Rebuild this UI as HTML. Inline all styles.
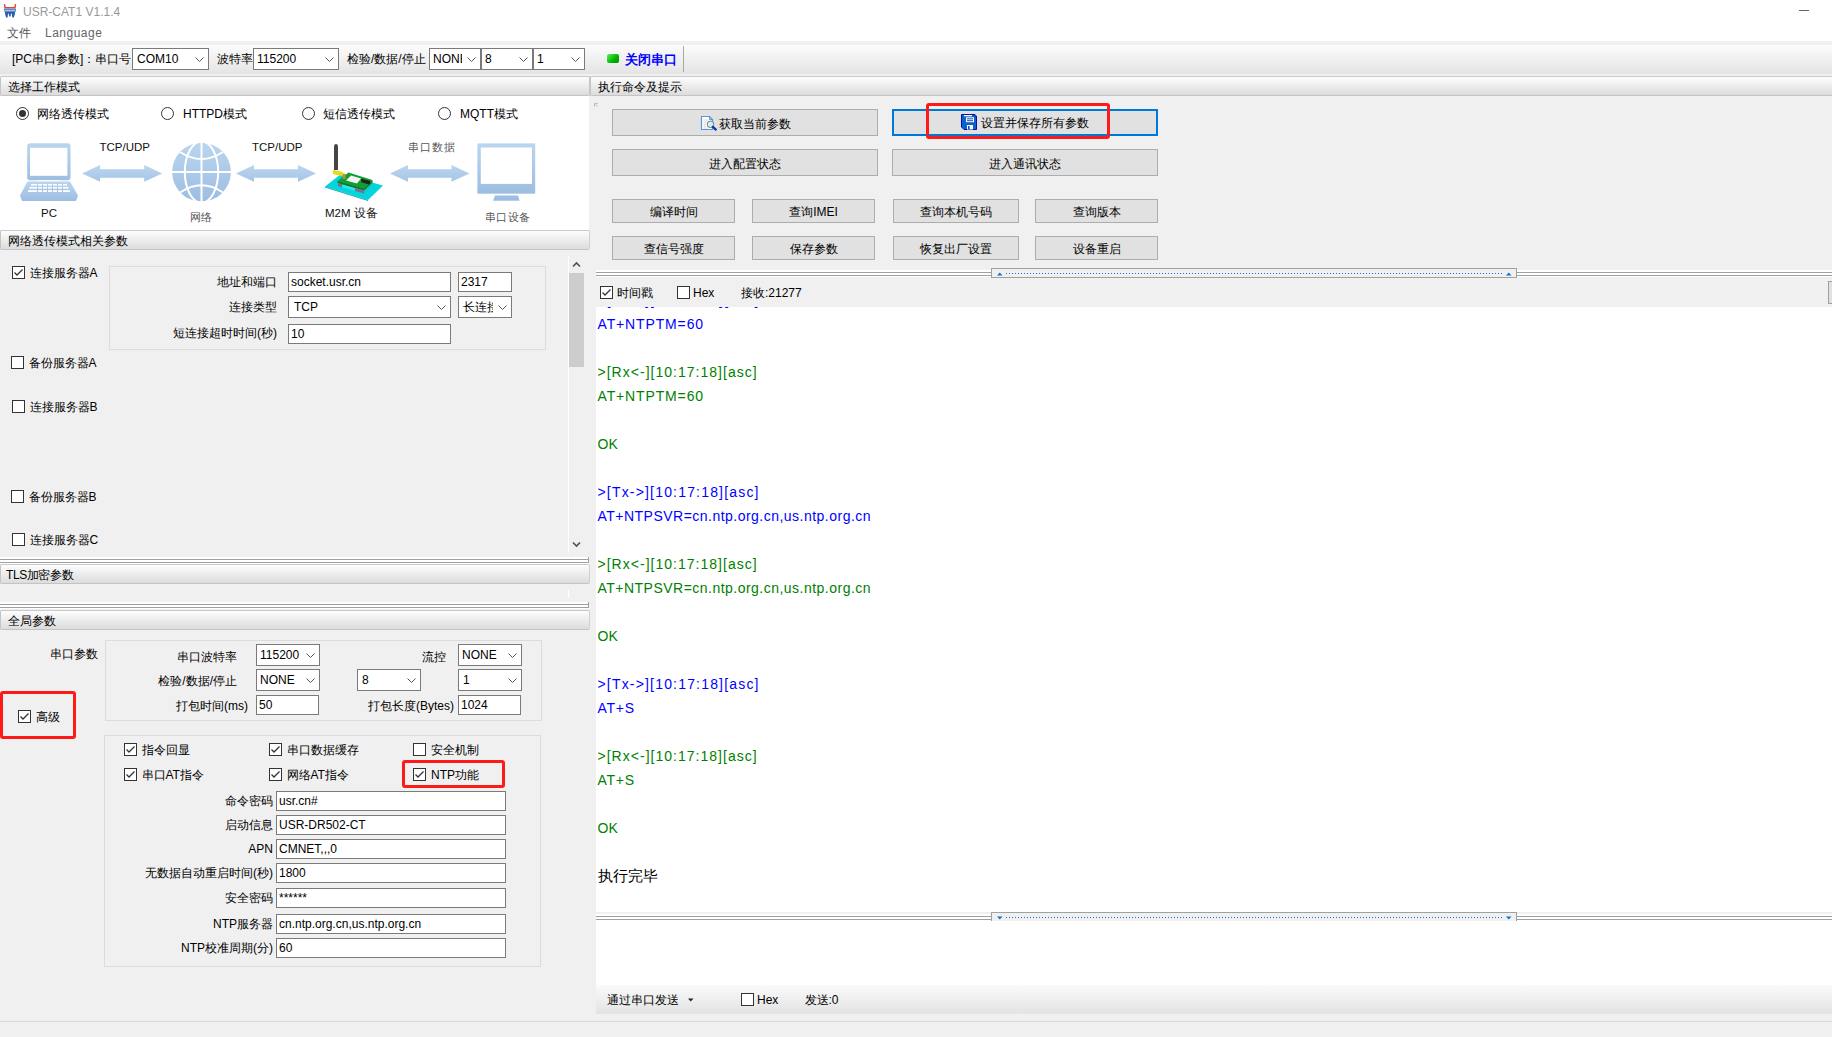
<!DOCTYPE html>
<html><head><meta charset="utf-8"><title>USR-CAT1</title>
<style>
html,body{margin:0;padding:0}
body{width:1832px;height:1037px;overflow:hidden;position:relative;background:#f0f0f0;font-family:'Liberation Sans', sans-serif;font-size:12px;color:#000}
.a{position:absolute;box-sizing:content-box}
.t{position:absolute;white-space:nowrap}
.hdr{background:linear-gradient(#fdfdfd,#dcdcdc);border-top:1px solid #cacaca;border-bottom:1px solid #c4c4c4;border-left:1px solid #c4c4c4;border-right:1px solid #d0d0d0;border-radius:2px}
</style></head><body>

<div class="a" style="left:0px;top:0px;width:1832px;height:41px;background:#fff"></div>
<svg class="a" style="left:0;top:0" width="20" height="20" viewBox="0 0 20 20"><path d="M3.8 4 L5 4 L5.8 7 L14.2 7 L15 4 L16.2 4 L15.6 8.6 L4.4 8.6 Z" fill="#d9482f"/><rect x="4" y="8.6" width="12" height="3" fill="#5a88c8"/><rect x="4.8" y="10" width="10.4" height="0.9" fill="#b8cbe8"/><path d="M4.8 11.6 L15.2 11.6 L14.8 14.5 L13.8 17.6 L12.3 17.6 L11.9 13.8 L11 13.8 L10.6 16.6 L9.2 16.6 L8.8 13.8 L8 13.8 L7.6 17.6 L6.1 17.6 L5.2 14.5 Z" fill="#2a5fb4"/></svg>
<div class="t" style="left:23px;top:3.5px;font-size:12px;line-height:16px;color:#999;">USR-CAT1 V1.1.4</div>
<div class="a" style="left:1799px;top:10px;width:10px;height:1px;background:#666"></div>
<div class="t" style="left:7px;top:24.5px;font-size:12px;line-height:16px;color:#555;">文件</div>
<div class="t" style="left:45px;top:24.5px;font-size:12px;line-height:16px;color:#666;letter-spacing:0.5px">Language</div>
<div class="a" style="left:0px;top:45px;width:1832px;height:29px;background:linear-gradient(#fcfcfc,#e4e4e4)"></div>
<div class="t" style="left:12px;top:51.0px;font-size:12px;line-height:16px;color:#000;">[PC串口参数]：串口号</div>
<div class="a" style="left:132px;top:48px;width:75px;height:20px;border:1px solid #7a7a7a;background:#fff;overflow:hidden"><div class="a" style="left:4px;top:2.0px;right:18px;height:16px;overflow:hidden"><div class="t" style="left:0;top:0;line-height:16px;font-size:12px">COM10</div></div><svg width="9" height="5" viewBox="0 0 9 5" style="position:absolute;right:4px;top:8px"><path d="M0.5 0.5 L4.5 4.5 L8.5 0.5" fill="none" stroke="#555" stroke-width="1"/></svg></div>
<div class="t" style="left:217px;top:51.0px;font-size:12px;line-height:16px;color:#000;">波特率</div>
<div class="a" style="left:253px;top:48px;width:84px;height:20px;border:1px solid #7a7a7a;background:#fff;overflow:hidden"><div class="a" style="left:3px;top:2.0px;right:18px;height:16px;overflow:hidden"><div class="t" style="left:0;top:0;line-height:16px;font-size:12px">115200</div></div><svg width="9" height="5" viewBox="0 0 9 5" style="position:absolute;right:4px;top:8px"><path d="M0.5 0.5 L4.5 4.5 L8.5 0.5" fill="none" stroke="#555" stroke-width="1"/></svg></div>
<div class="t" style="left:347px;top:51.0px;font-size:12px;line-height:16px;color:#000;">检验/数据/停止</div>
<div class="a" style="left:429px;top:48px;width:50px;height:20px;border:1px solid #7a7a7a;background:#fff;overflow:hidden"><div class="a" style="left:3px;top:2.0px;right:18px;height:16px;overflow:hidden"><div class="t" style="left:0;top:0;line-height:16px;font-size:12px">NONE</div></div><svg width="9" height="5" viewBox="0 0 9 5" style="position:absolute;right:4px;top:8px"><path d="M0.5 0.5 L4.5 4.5 L8.5 0.5" fill="none" stroke="#555" stroke-width="1"/></svg></div>
<div class="a" style="left:481px;top:48px;width:50px;height:20px;border:1px solid #7a7a7a;background:#fff;overflow:hidden"><div class="a" style="left:3px;top:2.0px;right:18px;height:16px;overflow:hidden"><div class="t" style="left:0;top:0;line-height:16px;font-size:12px">8</div></div><svg width="9" height="5" viewBox="0 0 9 5" style="position:absolute;right:4px;top:8px"><path d="M0.5 0.5 L4.5 4.5 L8.5 0.5" fill="none" stroke="#555" stroke-width="1"/></svg></div>
<div class="a" style="left:533px;top:48px;width:50px;height:20px;border:1px solid #7a7a7a;background:#fff;overflow:hidden"><div class="a" style="left:3px;top:2.0px;right:18px;height:16px;overflow:hidden"><div class="t" style="left:0;top:0;line-height:16px;font-size:12px">1</div></div><svg width="9" height="5" viewBox="0 0 9 5" style="position:absolute;right:4px;top:8px"><path d="M0.5 0.5 L4.5 4.5 L8.5 0.5" fill="none" stroke="#555" stroke-width="1"/></svg></div>
<div class="a" style="left:607px;top:54px;width:12px;height:9px;border-radius:2px;background:linear-gradient(135deg,#5ff05f,#00b400 60%,#009000)"></div>
<div class="t" style="left:625px;top:51.0px;font-size:13px;line-height:17px;color:#0000ff;font-weight:bold">关闭串口</div>
<div class="a" style="left:683px;top:46px;width:1px;height:26px;background:#a8a8a8"></div>
<div class="a hdr" style="left:0px;top:76px;width:588px;height:18px"></div>
<div class="t" style="left:8px;top:78.5px;font-size:12px;line-height:16px;color:#000;">选择工作模式</div>
<div class="a" style="left:0px;top:96px;width:589px;height:134px;background:#fff"></div>
<div class="a" style="left:589px;top:76px;width:1px;height:20px;background:#c8c8c8"></div>
<svg class="a" width="13" height="13" style="left:16.0px;top:107.0px"><circle cx="6.5" cy="6.5" r="6" fill="#fff" stroke="#333" stroke-width="1"/><circle cx="6.5" cy="6.5" r="3.5" fill="#333"/></svg>
<div class="t" style="left:37px;top:105.5px;font-size:12px;line-height:16px;color:#000;">网络透传模式</div>
<svg class="a" width="13" height="13" style="left:161.0px;top:107.0px"><circle cx="6.5" cy="6.5" r="6" fill="#fff" stroke="#333" stroke-width="1"/></svg>
<div class="t" style="left:183px;top:105.5px;font-size:12px;line-height:16px;color:#000;">HTTPD模式</div>
<svg class="a" width="13" height="13" style="left:302.0px;top:107.0px"><circle cx="6.5" cy="6.5" r="6" fill="#fff" stroke="#333" stroke-width="1"/></svg>
<div class="t" style="left:323px;top:105.5px;font-size:12px;line-height:16px;color:#000;">短信透传模式</div>
<svg class="a" width="13" height="13" style="left:438.0px;top:107.0px"><circle cx="6.5" cy="6.5" r="6" fill="#fff" stroke="#333" stroke-width="1"/></svg>
<div class="t" style="left:460px;top:105.5px;font-size:12px;line-height:16px;color:#000;">MQTT模式</div>
<svg class="a" style="left:0;top:96px" width="589" height="134" viewBox="0 96 589 134"><defs><linearGradient id="gb" x1="0" y1="0" x2="0" y2="1"><stop offset="0" stop-color="#bad5ef"/><stop offset="1" stop-color="#9dbee2"/></linearGradient><linearGradient id="ga" x1="0" y1="0" x2="0" y2="1"><stop offset="0" stop-color="#bcd5ee"/><stop offset="1" stop-color="#a6c5e6"/></linearGradient></defs><rect x="27.2" y="143.3" width="43.3" height="37" rx="3" fill="url(#gb)"/><rect x="30" y="147.8" width="37.4" height="28" fill="#fff"/><rect x="37.5" y="180.2" width="22.5" height="0.9" fill="#fff"/><polygon points="27.5,181.5 70,181.5 78,195.5 76,201 22,201 20,195.5" fill="url(#gb)"/><g fill="#fff"><rect x="31" y="184" width="36" height="1.6"/><rect x="29.5" y="187" width="39" height="1.6"/><rect x="28" y="190.2" width="42" height="1.8"/></g><g fill="url(#gb)"><rect x="37" y="183" width="1" height="10"/><rect x="42" y="183" width="1" height="10"/><rect x="47" y="183" width="1" height="10"/><rect x="52" y="183" width="1" height="10"/><rect x="57" y="183" width="1" height="10"/><rect x="62" y="183" width="1" height="10"/></g><circle cx="201.5" cy="172.1" r="29.4" fill="url(#gb)"/><g fill="none" stroke="#fff" stroke-width="2"><line x1="201.5" y1="141" x2="201.5" y2="203"/><line x1="171" y1="172.1" x2="232" y2="172.1"/><ellipse cx="201.5" cy="172.1" rx="16.7" ry="30.5"/><path d="M180 152 Q201.5 166 223 152"/><path d="M180 192.5 Q201.5 178 223 192.5"/></g><rect x="477.4" y="143.4" width="57.8" height="50.3" fill="url(#gb)"/><rect x="480.8" y="147.5" width="51.2" height="36.4" fill="#fff"/><polygon points="495,195.4 518,195.4 519.6,200.8 493,200.8" fill="#9dbee2"/><polygon points="82.1,173.4 100.1,165.1 100.1,169.15 144.2,169.15 144.2,165.1 162.2,173.4 144.2,181.70000000000002 144.2,177.65 100.1,177.65 100.1,181.70000000000002" fill="url(#ga)"/><polygon points="236,173.4 254,165.1 254,169.15 298,169.15 298,165.1 316,173.4 298,181.70000000000002 298,177.65 254,177.65 254,181.70000000000002" fill="url(#ga)"/><polygon points="390,173.4 408,165.1 408,169.15 451.5,169.15 451.5,165.1 469.5,173.4 451.5,181.70000000000002 451.5,177.65 408,177.65 408,181.70000000000002" fill="url(#ga)"/><polygon points="325,186.5 341,174 383,185.5 368,200" fill="#00d6dc"/><polygon points="325,186.5 368,200 368,201 325,187.5" fill="#08a8b0"/><polygon points="338,183 364,190.5 364,193.5 338,186" fill="#30e4ea"/><polygon points="364,190.5 372.5,182.5 372.5,185.5 364,193.5" fill="#20c0c8"/><polygon points="337.5,181 348.5,172.5 372.5,180 364,188.5" fill="#10a030"/><polygon points="337.5,181 364,188.5 372.5,180 372.5,182.5 364,190.5 337.5,183" fill="#0a7a24"/><polygon points="338,183 342,184.2 342,187.5 338,186.3" fill="#7a6f8a"/><polygon points="355,188 364,190.5 364,193.5 355,191" fill="#7a6f8a"/><polygon points="346,180.5 351,175.5 361,178.5 357,183.5" fill="#f4f4f4"/><polygon points="361,178.5 370.5,181 369.5,184.5 361.5,182.5" fill="#222"/><path d="M334 170 L334 147 Q334 144 336 144 Q338 144 338 147 L338 170 Z" fill="#454545"/><polygon points="333,170 341,171.5 345.5,174 341,176 333,174" fill="#e8d820"/><rect x="343" y="174" width="2.5" height="5" fill="#d08a2a"/></svg>
<div class="t" style="left:99.5px;top:139.75px;font-size:11.5px;line-height:15.5px;color:#111;">TCP/UDP</div>
<div class="t" style="left:252px;top:139.75px;font-size:11.5px;line-height:15.5px;color:#111;">TCP/UDP</div>
<div class="t" style="left:407.5px;top:140.0px;font-size:11px;line-height:15px;color:#555;letter-spacing:1px">串口数据</div>
<div class="t" style="left:41px;top:205.75px;font-size:11.5px;line-height:15.5px;color:#111;">PC</div>
<div class="t" style="left:190px;top:209.5px;font-size:11px;line-height:15px;color:#555;">网络</div>
<div class="t" style="left:325px;top:205.75px;font-size:11.5px;line-height:15.5px;color:#111;">M2M 设备</div>
<div class="t" style="left:484.5px;top:209.5px;font-size:11px;line-height:15px;color:#555;letter-spacing:0.5px">串口设备</div>
<div class="a hdr" style="left:0px;top:230px;width:588px;height:18px"></div>
<div class="t" style="left:8px;top:232.5px;font-size:12px;line-height:16px;color:#000;">网络透传模式相关参数</div>
<div class="a" style="left:12px;top:266px;width:11px;height:11px;border:1px solid #333;background:#fff"><svg width="11" height="11" viewBox="0 0 11 11" style="position:absolute;left:0;top:0"><path d="M1.5 5.5 L4 8 L9.5 2.5" fill="none" stroke="#333" stroke-width="1.3"/></svg></div>
<div class="t" style="left:29.5px;top:264.5px;font-size:12px;line-height:16px;color:#000;">连接服务器A</div>
<div class="a" style="left:109px;top:266px;width:435px;height:82px;border:1px solid #dcdcdc"></div>
<div class="t" style="right:1555px;top:274.0px;font-size:12px;line-height:16px;color:#000;text-align:right;">地址和端口</div>
<div class="a" style="left:288px;top:272px;width:161px;height:18px;border:1px solid #7a7a7a;background:#fff;overflow:hidden"><div class="t" style="left:2px;top:1.0px;line-height:16px;font-size:12px">socket.usr.cn</div></div>
<div class="a" style="left:458px;top:272px;width:52px;height:18px;border:1px solid #7a7a7a;background:#fff;overflow:hidden"><div class="t" style="left:2px;top:1.0px;line-height:16px;font-size:12px">2317</div></div>
<div class="t" style="right:1555px;top:299.0px;font-size:12px;line-height:16px;color:#000;text-align:right;">连接类型</div>
<div class="a" style="left:288px;top:296px;width:161px;height:20px;border:1px solid #7a7a7a;background:#fff;overflow:hidden"><div class="a" style="left:5px;top:2.0px;right:18px;height:16px;overflow:hidden"><div class="t" style="left:0;top:0;line-height:16px;font-size:12px">TCP</div></div><svg width="9" height="5" viewBox="0 0 9 5" style="position:absolute;right:4px;top:8px"><path d="M0.5 0.5 L4.5 4.5 L8.5 0.5" fill="none" stroke="#555" stroke-width="1"/></svg></div>
<div class="a" style="left:458px;top:296px;width:52px;height:20px;border:1px solid #7a7a7a;background:#fff;overflow:hidden"><div class="a" style="left:4px;top:2.0px;right:18px;height:16px;overflow:hidden"><div class="t" style="left:0;top:0;line-height:16px;font-size:12px">长连接</div></div><svg width="9" height="5" viewBox="0 0 9 5" style="position:absolute;right:4px;top:8px"><path d="M0.5 0.5 L4.5 4.5 L8.5 0.5" fill="none" stroke="#555" stroke-width="1"/></svg></div>
<div class="t" style="right:1555px;top:325.0px;font-size:12px;line-height:16px;color:#000;text-align:right;">短连接超时时间(秒)</div>
<div class="a" style="left:288px;top:324px;width:161px;height:18px;border:1px solid #7a7a7a;background:#fff;overflow:hidden"><div class="t" style="left:2px;top:1.0px;line-height:16px;font-size:12px">10</div></div>
<div class="a" style="left:11px;top:356px;width:11px;height:11px;border:1px solid #333;background:#fff"></div>
<div class="t" style="left:28.5px;top:354.5px;font-size:12px;line-height:16px;color:#000;">备份服务器A</div>
<div class="a" style="left:12px;top:400px;width:11px;height:11px;border:1px solid #333;background:#fff"></div>
<div class="t" style="left:29.5px;top:398.5px;font-size:12px;line-height:16px;color:#000;">连接服务器B</div>
<div class="a" style="left:11px;top:490px;width:11px;height:11px;border:1px solid #333;background:#fff"></div>
<div class="t" style="left:28.5px;top:488.5px;font-size:12px;line-height:16px;color:#000;">备份服务器B</div>
<div class="a" style="left:12px;top:533px;width:11px;height:11px;border:1px solid #333;background:#fff"></div>
<div class="t" style="left:29.5px;top:531.5px;font-size:12px;line-height:16px;color:#000;">连接服务器C</div>
<div class="a" style="left:568px;top:256px;width:1px;height:297px;background:#fff"></div>
<svg class="a" style="left:572px;top:261px" width="9" height="7" viewBox="0 0 9 7"><path d="M1 5.5 L4.5 2 L8 5.5" fill="none" stroke="#505050" stroke-width="1.6"/></svg>
<svg class="a" style="left:572px;top:541px" width="9" height="7" viewBox="0 0 9 7"><path d="M1 1.5 L4.5 5 L8 1.5" fill="none" stroke="#505050" stroke-width="1.6"/></svg>
<div class="a" style="left:569px;top:273px;width:15px;height:94px;background:#cdcdcd"></div>
<div class="a" style="left:0px;top:557px;width:589px;height:7px;background:#fff"></div>
<div class="a" style="left:0px;top:559px;width:589px;height:1px;background:#a0a0a0"></div>
<div class="a" style="left:0px;top:562px;width:589px;height:1px;background:#a0a0a0"></div>
<div class="a" style="left:588px;top:557px;width:1px;height:6px;background:#a0a0a0"></div>
<div class="a hdr" style="left:0px;top:564px;width:588px;height:18px"></div>
<div class="t" style="left:6px;top:566.5px;font-size:12px;line-height:16px;color:#000;letter-spacing:-0.4px">TLS加密参数</div>
<div class="a" style="left:568px;top:590px;width:1px;height:8px;background:#fff"></div>
<div class="a" style="left:0px;top:602px;width:589px;height:7px;background:#fff"></div>
<div class="a" style="left:0px;top:604px;width:589px;height:1px;background:#a0a0a0"></div>
<div class="a" style="left:0px;top:607px;width:589px;height:1px;background:#a0a0a0"></div>
<div class="a" style="left:588px;top:602px;width:1px;height:6px;background:#a0a0a0"></div>
<div class="a hdr" style="left:0px;top:610px;width:588px;height:18px"></div>
<div class="t" style="left:8px;top:612.5px;font-size:12px;line-height:16px;color:#000;">全局参数</div>
<div class="t" style="right:1734px;top:645.5px;font-size:12px;line-height:16px;color:#000;text-align:right;">串口参数</div>
<div class="a" style="left:105px;top:640px;width:435px;height:79px;border:1px solid #dcdcdc"></div>
<div class="t" style="right:1595px;top:649.0px;font-size:12px;line-height:16px;color:#000;text-align:right;">串口波特率</div>
<div class="a" style="left:256px;top:644px;width:62px;height:20px;border:1px solid #7a7a7a;background:#fff;overflow:hidden"><div class="a" style="left:3px;top:2.0px;right:18px;height:16px;overflow:hidden"><div class="t" style="left:0;top:0;line-height:16px;font-size:12px">115200</div></div><svg width="9" height="5" viewBox="0 0 9 5" style="position:absolute;right:4px;top:8px"><path d="M0.5 0.5 L4.5 4.5 L8.5 0.5" fill="none" stroke="#555" stroke-width="1"/></svg></div>
<div class="t" style="right:1386px;top:649.0px;font-size:12px;line-height:16px;color:#000;text-align:right;">流控</div>
<div class="a" style="left:458px;top:644px;width:62px;height:20px;border:1px solid #7a7a7a;background:#fff;overflow:hidden"><div class="a" style="left:3px;top:2.0px;right:18px;height:16px;overflow:hidden"><div class="t" style="left:0;top:0;line-height:16px;font-size:12px">NONE</div></div><svg width="9" height="5" viewBox="0 0 9 5" style="position:absolute;right:4px;top:8px"><path d="M0.5 0.5 L4.5 4.5 L8.5 0.5" fill="none" stroke="#555" stroke-width="1"/></svg></div>
<div class="t" style="right:1595px;top:673.0px;font-size:12px;line-height:16px;color:#000;text-align:right;">检验/数据/停止</div>
<div class="a" style="left:256px;top:669px;width:62px;height:20px;border:1px solid #7a7a7a;background:#fff;overflow:hidden"><div class="a" style="left:3px;top:2.0px;right:18px;height:16px;overflow:hidden"><div class="t" style="left:0;top:0;line-height:16px;font-size:12px">NONE</div></div><svg width="9" height="5" viewBox="0 0 9 5" style="position:absolute;right:4px;top:8px"><path d="M0.5 0.5 L4.5 4.5 L8.5 0.5" fill="none" stroke="#555" stroke-width="1"/></svg></div>
<div class="a" style="left:357px;top:669px;width:62px;height:20px;border:1px solid #7a7a7a;background:#fff;overflow:hidden"><div class="a" style="left:4px;top:2.0px;right:18px;height:16px;overflow:hidden"><div class="t" style="left:0;top:0;line-height:16px;font-size:12px">8</div></div><svg width="9" height="5" viewBox="0 0 9 5" style="position:absolute;right:4px;top:8px"><path d="M0.5 0.5 L4.5 4.5 L8.5 0.5" fill="none" stroke="#555" stroke-width="1"/></svg></div>
<div class="a" style="left:458px;top:669px;width:62px;height:20px;border:1px solid #7a7a7a;background:#fff;overflow:hidden"><div class="a" style="left:4px;top:2.0px;right:18px;height:16px;overflow:hidden"><div class="t" style="left:0;top:0;line-height:16px;font-size:12px">1</div></div><svg width="9" height="5" viewBox="0 0 9 5" style="position:absolute;right:4px;top:8px"><path d="M0.5 0.5 L4.5 4.5 L8.5 0.5" fill="none" stroke="#555" stroke-width="1"/></svg></div>
<div class="t" style="right:1584px;top:697.5px;font-size:12px;line-height:16px;color:#000;text-align:right;">打包时间(ms)</div>
<div class="a" style="left:256px;top:695px;width:61px;height:18px;border:1px solid #7a7a7a;background:#fff;overflow:hidden"><div class="t" style="left:2px;top:1.0px;line-height:16px;font-size:12px">50</div></div>
<div class="t" style="right:1378px;top:697.5px;font-size:12px;line-height:16px;color:#000;text-align:right;">打包长度(Bytes)</div>
<div class="a" style="left:458px;top:695px;width:61px;height:18px;border:1px solid #7a7a7a;background:#fff;overflow:hidden"><div class="t" style="left:2px;top:1.0px;line-height:16px;font-size:12px">1024</div></div>
<div class="a" style="left:18px;top:710px;width:11px;height:11px;border:1px solid #333;background:#fff"><svg width="11" height="11" viewBox="0 0 11 11" style="position:absolute;left:0;top:0"><path d="M1.5 5.5 L4 8 L9.5 2.5" fill="none" stroke="#333" stroke-width="1.3"/></svg></div>
<div class="t" style="left:35.5px;top:708.5px;font-size:12px;line-height:16px;color:#000;">高级</div>
<div class="a" style="left:0px;top:691px;width:70px;height:42px;border:3px solid #ff1a1a;border-radius:3px"></div>
<div class="a" style="left:104px;top:735px;width:435px;height:230px;border:1px solid #dcdcdc"></div>
<div class="a" style="left:124px;top:743px;width:11px;height:11px;border:1px solid #333;background:#fff"><svg width="11" height="11" viewBox="0 0 11 11" style="position:absolute;left:0;top:0"><path d="M1.5 5.5 L4 8 L9.5 2.5" fill="none" stroke="#333" stroke-width="1.3"/></svg></div>
<div class="t" style="left:141.5px;top:741.5px;font-size:12px;line-height:16px;color:#000;">指令回显</div>
<div class="a" style="left:269px;top:743px;width:11px;height:11px;border:1px solid #333;background:#fff"><svg width="11" height="11" viewBox="0 0 11 11" style="position:absolute;left:0;top:0"><path d="M1.5 5.5 L4 8 L9.5 2.5" fill="none" stroke="#333" stroke-width="1.3"/></svg></div>
<div class="t" style="left:286.5px;top:741.5px;font-size:12px;line-height:16px;color:#000;">串口数据缓存</div>
<div class="a" style="left:413px;top:743px;width:11px;height:11px;border:1px solid #333;background:#fff"></div>
<div class="t" style="left:431px;top:741.5px;font-size:12px;line-height:16px;color:#000;">安全机制</div>
<div class="a" style="left:124px;top:768px;width:11px;height:11px;border:1px solid #333;background:#fff"><svg width="11" height="11" viewBox="0 0 11 11" style="position:absolute;left:0;top:0"><path d="M1.5 5.5 L4 8 L9.5 2.5" fill="none" stroke="#333" stroke-width="1.3"/></svg></div>
<div class="t" style="left:141.5px;top:766.5px;font-size:12px;line-height:16px;color:#000;">串口AT指令</div>
<div class="a" style="left:269px;top:768px;width:11px;height:11px;border:1px solid #333;background:#fff"><svg width="11" height="11" viewBox="0 0 11 11" style="position:absolute;left:0;top:0"><path d="M1.5 5.5 L4 8 L9.5 2.5" fill="none" stroke="#333" stroke-width="1.3"/></svg></div>
<div class="t" style="left:286.5px;top:766.5px;font-size:12px;line-height:16px;color:#000;">网络AT指令</div>
<div class="a" style="left:413px;top:768px;width:11px;height:11px;border:1px solid #333;background:#fff"><svg width="11" height="11" viewBox="0 0 11 11" style="position:absolute;left:0;top:0"><path d="M1.5 5.5 L4 8 L9.5 2.5" fill="none" stroke="#333" stroke-width="1.3"/></svg></div>
<div class="t" style="left:431px;top:766.5px;font-size:12px;line-height:16px;color:#000;">NTP功能</div>
<div class="a" style="left:402px;top:760px;width:97px;height:22px;border:3px solid #ff1a1a;border-radius:3px"></div>
<div class="t" style="right:1559px;top:793.0px;font-size:12px;line-height:16px;color:#000;text-align:right;">命令密码</div>
<div class="a" style="left:276px;top:791px;width:228px;height:18px;border:1px solid #7a7a7a;background:#fff;overflow:hidden"><div class="t" style="left:2px;top:1.0px;line-height:16px;font-size:12px">usr.cn#</div></div>
<div class="t" style="right:1559px;top:817.0px;font-size:12px;line-height:16px;color:#000;text-align:right;">启动信息</div>
<div class="a" style="left:276px;top:815px;width:228px;height:18px;border:1px solid #7a7a7a;background:#fff;overflow:hidden"><div class="t" style="left:2px;top:1.0px;line-height:16px;font-size:12px">USR-DR502-CT</div></div>
<div class="t" style="right:1559px;top:841.0px;font-size:12px;line-height:16px;color:#000;text-align:right;">APN</div>
<div class="a" style="left:276px;top:839px;width:228px;height:18px;border:1px solid #7a7a7a;background:#fff;overflow:hidden"><div class="t" style="left:2px;top:1.0px;line-height:16px;font-size:12px">CMNET,,,0</div></div>
<div class="t" style="right:1559px;top:865.0px;font-size:12px;line-height:16px;color:#000;text-align:right;">无数据自动重启时间(秒)</div>
<div class="a" style="left:276px;top:863px;width:228px;height:18px;border:1px solid #7a7a7a;background:#fff;overflow:hidden"><div class="t" style="left:2px;top:1.0px;line-height:16px;font-size:12px">1800</div></div>
<div class="t" style="right:1559px;top:890.0px;font-size:12px;line-height:16px;color:#000;text-align:right;">安全密码</div>
<div class="a" style="left:276px;top:888px;width:228px;height:18px;border:1px solid #7a7a7a;background:#fff;overflow:hidden"><div class="t" style="left:2px;top:1.0px;line-height:16px;font-size:12px">******</div></div>
<div class="t" style="right:1559px;top:916.0px;font-size:12px;line-height:16px;color:#000;text-align:right;">NTP服务器</div>
<div class="a" style="left:276px;top:914px;width:228px;height:18px;border:1px solid #7a7a7a;background:#fff;overflow:hidden"><div class="t" style="left:2px;top:1.0px;line-height:16px;font-size:12px">cn.ntp.org.cn,us.ntp.org.cn</div></div>
<div class="t" style="right:1559px;top:940.0px;font-size:12px;line-height:16px;color:#000;text-align:right;">NTP校准周期(分)</div>
<div class="a" style="left:276px;top:938px;width:228px;height:18px;border:1px solid #7a7a7a;background:#fff;overflow:hidden"><div class="t" style="left:2px;top:1.0px;line-height:16px;font-size:12px">60</div></div>
<div class="a hdr" style="left:590px;top:76px;width:1242px;height:18px"></div>
<div class="t" style="left:598px;top:78.5px;font-size:12px;line-height:16px;color:#000;">执行命令及提示</div>
<svg class="a" style="left:594px;top:103px" width="4" height="4"><path d="M0.5 3.5 L0.5 0.5 L3.5 0.5 M1.5 1.5 L3.5 3.5" stroke="#aaa" stroke-width="0.8" fill="none"/></svg>
<div class="a" style="left:612px;top:109px;width:264px;height:25px;border:1px solid #adadad;background:#e1e1e1"><div class="a" style="left:0;width:100%;top:2px;height:25px;line-height:25px;text-align:center;font-size:12px;white-space:nowrap"><svg width="17" height="16" viewBox="0 0 17 16" style="vertical-align:-3px;margin-right:2px"><path d="M1.5 1.5 H9.5 L12.5 4.5 V14.5 H1.5 Z" fill="#fff" stroke="#5b96d6" stroke-width="1.2"/><path d="M9.5 1.5 V4.5 H12.5" fill="none" stroke="#5b96d6" stroke-width="1"/><g stroke="#ccc" stroke-width="0.8"><line x1="3.5" y1="5" x2="8" y2="5"/><line x1="3.5" y1="7" x2="7" y2="7"/><line x1="3.5" y1="9" x2="6" y2="9"/><line x1="3.5" y1="11" x2="6" y2="11"/><line x1="3.5" y1="13" x2="8" y2="13"/></g><circle cx="10.5" cy="9.3" r="3.3" fill="#c8f4f6" stroke="#777" stroke-width="1"/><line x1="12.8" y1="11.8" x2="15.8" y2="14.6" stroke="#0832a6" stroke-width="2.2" stroke-linecap="round"/></svg>获取当前参数</div></div>
<div class="a" style="left:892px;top:109px;width:262px;height:23px;border:2px solid #0078d7;background:#e1e1e1"><div class="a" style="left:0;width:100%;top:1px;height:23px;line-height:23px;text-align:center;font-size:12px;white-space:nowrap"><svg width="16" height="16" viewBox="0 0 16 16" style="vertical-align:-3px;margin-right:4px"><path d="M0.5 0.5 H14 V2 H15.5 V15.5 H3 L0.5 13 Z" fill="#0a62cc" stroke="#0014a0" stroke-width="1"/><rect x="3" y="1" width="8" height="1.3" fill="#fff"/><rect x="5" y="3.3" width="8" height="4.9" fill="#fff"/><rect x="6" y="4.4" width="6" height="0.9" fill="#0a2aa0"/><rect x="6" y="6.3" width="6" height="0.9" fill="#0a2aa0"/><rect x="6" y="11" width="6" height="4.5" fill="#fff"/><rect x="7" y="12" width="1.6" height="3.5" fill="#0a4ac0"/></svg>设置并保存所有参数</div></div>
<div class="a" style="left:926px;top:103px;width:178px;height:30px;border:3px solid #ff1a1a;border-radius:3px"></div>
<div class="a" style="left:612px;top:149px;width:264px;height:25px;border:1px solid #adadad;background:#e1e1e1"><div class="a" style="left:0;width:100%;top:2px;height:25px;line-height:25px;text-align:center;font-size:12px;white-space:nowrap">进入配置状态</div></div>
<div class="a" style="left:892px;top:149px;width:264px;height:25px;border:1px solid #adadad;background:#e1e1e1"><div class="a" style="left:0;width:100%;top:2px;height:25px;line-height:25px;text-align:center;font-size:12px;white-space:nowrap">进入通讯状态</div></div>
<div class="a" style="left:612px;top:199px;width:121px;height:22px;border:1px solid #adadad;background:#e1e1e1"><div class="a" style="left:0;width:100%;top:1px;height:22px;line-height:22px;text-align:center;font-size:12px;white-space:nowrap">编译时间</div></div>
<div class="a" style="left:752px;top:199px;width:121px;height:22px;border:1px solid #adadad;background:#e1e1e1"><div class="a" style="left:0;width:100%;top:1px;height:22px;line-height:22px;text-align:center;font-size:12px;white-space:nowrap">查询IMEI</div></div>
<div class="a" style="left:893px;top:199px;width:124px;height:22px;border:1px solid #adadad;background:#e1e1e1"><div class="a" style="left:0;width:100%;top:1px;height:22px;line-height:22px;text-align:center;font-size:12px;white-space:nowrap">查询本机号码</div></div>
<div class="a" style="left:1035px;top:199px;width:121px;height:22px;border:1px solid #adadad;background:#e1e1e1"><div class="a" style="left:0;width:100%;top:1px;height:22px;line-height:22px;text-align:center;font-size:12px;white-space:nowrap">查询版本</div></div>
<div class="a" style="left:612px;top:236px;width:121px;height:22px;border:1px solid #adadad;background:#e1e1e1"><div class="a" style="left:0;width:100%;top:1px;height:22px;line-height:22px;text-align:center;font-size:12px;white-space:nowrap">查信号强度</div></div>
<div class="a" style="left:752px;top:236px;width:121px;height:22px;border:1px solid #adadad;background:#e1e1e1"><div class="a" style="left:0;width:100%;top:1px;height:22px;line-height:22px;text-align:center;font-size:12px;white-space:nowrap">保存参数</div></div>
<div class="a" style="left:893px;top:236px;width:124px;height:22px;border:1px solid #adadad;background:#e1e1e1"><div class="a" style="left:0;width:100%;top:1px;height:22px;line-height:22px;text-align:center;font-size:12px;white-space:nowrap">恢复出厂设置</div></div>
<div class="a" style="left:1035px;top:236px;width:121px;height:22px;border:1px solid #adadad;background:#e1e1e1"><div class="a" style="left:0;width:100%;top:1px;height:22px;line-height:22px;text-align:center;font-size:12px;white-space:nowrap">设备重启</div></div>
<div class="a" style="left:596px;top:270px;width:1236px;height:7px;background:#fff"></div>
<div class="a" style="left:596px;top:272px;width:1236px;height:1px;background:#a0a0a0"></div>
<div class="a" style="left:596px;top:275px;width:1236px;height:1px;background:#a0a0a0"></div>
<div class="a" style="left:991px;top:268px;width:524px;height:8px;border:1px solid #a0a0a0;background:#f0f0f0"></div>
<svg class="a" style="left:997px;top:272px" width="6" height="4"><path d="M0 3.5 L2.75 0.5 L5.5 3.5 Z" fill="#1070d8"/></svg>
<svg class="a" style="left:1506px;top:272px" width="6" height="4"><path d="M0 3.5 L2.75 0.5 L5.5 3.5 Z" fill="#1070d8"/></svg>
<div class="a" style="left:1006px;top:273px;width:496px;height:1px;background:repeating-linear-gradient(90deg,#1070d8 0 1px,transparent 1px 3px)"></div>
<div class="a" style="left:600px;top:286px;width:11px;height:11px;border:1px solid #333;background:#fff"><svg width="11" height="11" viewBox="0 0 11 11" style="position:absolute;left:0;top:0"><path d="M1.5 5.5 L4 8 L9.5 2.5" fill="none" stroke="#333" stroke-width="1.3"/></svg></div>
<div class="t" style="left:617px;top:284.5px;font-size:12px;line-height:16px;color:#000;">时间戳</div>
<div class="a" style="left:677px;top:286px;width:11px;height:11px;border:1px solid #333;background:#fff"></div>
<div class="t" style="left:693px;top:284.5px;font-size:12px;line-height:16px;color:#000;">Hex</div>
<div class="t" style="left:741px;top:284.5px;font-size:12px;line-height:16px;color:#000;">接收:21277</div>
<div class="a" style="left:1828px;top:281px;width:5px;height:21px;background:#e1e1e1;border:1px solid #a0a0a0"></div>
<div class="a" style="left:596px;top:307px;width:1236px;height:605px;background:#fff"></div>
<div class="a" style="left:596px;top:307px;width:1236px;height:605px;overflow:hidden">
<div class="t" style="left:1.5px;top:-19px;font-size:14px;line-height:24px;color:#0000ff;letter-spacing:1.18px">&gt;[Tx-&gt;][10:17:18][asc]</div>
<div class="t" style="left:1.5px;top:5px;font-size:14px;line-height:24px;color:#0000ff;letter-spacing:0.86px">AT+NTPTM=60</div>
<div class="t" style="left:1.5px;top:53px;font-size:14px;line-height:24px;color:#008000;letter-spacing:1.02px">&gt;[Rx&lt;-][10:17:18][asc]</div>
<div class="t" style="left:1.5px;top:77px;font-size:14px;line-height:24px;color:#008000;letter-spacing:0.86px">AT+NTPTM=60</div>
<div class="t" style="left:1.5px;top:125px;font-size:14px;line-height:24px;color:#008000;letter-spacing:0px">OK</div>
<div class="t" style="left:1.5px;top:173px;font-size:14px;line-height:24px;color:#0000ff;letter-spacing:1.18px">&gt;[Tx-&gt;][10:17:18][asc]</div>
<div class="t" style="left:1.5px;top:197px;font-size:14px;line-height:24px;color:#0000ff;letter-spacing:0.48px">AT+NTPSVR=cn.ntp.org.cn,us.ntp.org.cn</div>
<div class="t" style="left:1.5px;top:245px;font-size:14px;line-height:24px;color:#008000;letter-spacing:1.02px">&gt;[Rx&lt;-][10:17:18][asc]</div>
<div class="t" style="left:1.5px;top:269px;font-size:14px;line-height:24px;color:#008000;letter-spacing:0.48px">AT+NTPSVR=cn.ntp.org.cn,us.ntp.org.cn</div>
<div class="t" style="left:1.5px;top:317px;font-size:14px;line-height:24px;color:#008000;letter-spacing:0px">OK</div>
<div class="t" style="left:1.5px;top:365px;font-size:14px;line-height:24px;color:#0000ff;letter-spacing:1.18px">&gt;[Tx-&gt;][10:17:18][asc]</div>
<div class="t" style="left:1.5px;top:389px;font-size:14px;line-height:24px;color:#0000ff;letter-spacing:0.73px">AT+S</div>
<div class="t" style="left:1.5px;top:437px;font-size:14px;line-height:24px;color:#008000;letter-spacing:1.02px">&gt;[Rx&lt;-][10:17:18][asc]</div>
<div class="t" style="left:1.5px;top:461px;font-size:14px;line-height:24px;color:#008000;letter-spacing:0.73px">AT+S</div>
<div class="t" style="left:1.5px;top:509px;font-size:14px;line-height:24px;color:#008000;letter-spacing:0px">OK</div>
<div class="t" style="left:1.5px;top:557px;font-size:15px;line-height:24px;color:#000">执行完毕</div>
</div>
<div class="a" style="left:596px;top:914px;width:1236px;height:7px;background:#fff"></div>
<div class="a" style="left:596px;top:916px;width:1236px;height:1px;background:#a0a0a0"></div>
<div class="a" style="left:596px;top:919px;width:1236px;height:1px;background:#a0a0a0"></div>
<div class="a" style="left:991px;top:912px;width:524px;height:8px;border:1px solid #a0a0a0;background:#f0f0f0"></div>
<svg class="a" style="left:997px;top:916px" width="6" height="4"><path d="M0 0.5 L2.75 3.5 L5.5 0.5 Z" fill="#1070d8"/></svg>
<svg class="a" style="left:1506px;top:916px" width="6" height="4"><path d="M0 0.5 L2.75 3.5 L5.5 0.5 Z" fill="#1070d8"/></svg>
<div class="a" style="left:1006px;top:917px;width:496px;height:1px;background:repeating-linear-gradient(90deg,#1070d8 0 1px,transparent 1px 3px)"></div>
<div class="a" style="left:596px;top:921px;width:1236px;height:64px;background:#fff"></div>
<div class="a" style="left:596px;top:985px;width:1236px;height:29px;background:linear-gradient(#fafafa,#e3e3e3)"></div>
<div class="t" style="left:607px;top:992.0px;font-size:12px;line-height:16px;color:#000;">通过串口发送</div>
<svg class="a" style="left:688px;top:998px" width="6" height="4"><path d="M0 0.5 L5.5 0.5 L2.75 3.5 Z" fill="#222"/></svg>
<div class="a" style="left:741px;top:993px;width:11px;height:11px;border:1px solid #333;background:#fff"></div>
<div class="t" style="left:757px;top:992.0px;font-size:12px;line-height:16px;color:#000;">Hex</div>
<div class="t" style="left:804.5px;top:992.0px;font-size:12px;line-height:16px;color:#000;">发送:0</div>
<div class="a" style="left:0px;top:1021px;width:1832px;height:1px;background:#d8d8d8"></div>
</body></html>
